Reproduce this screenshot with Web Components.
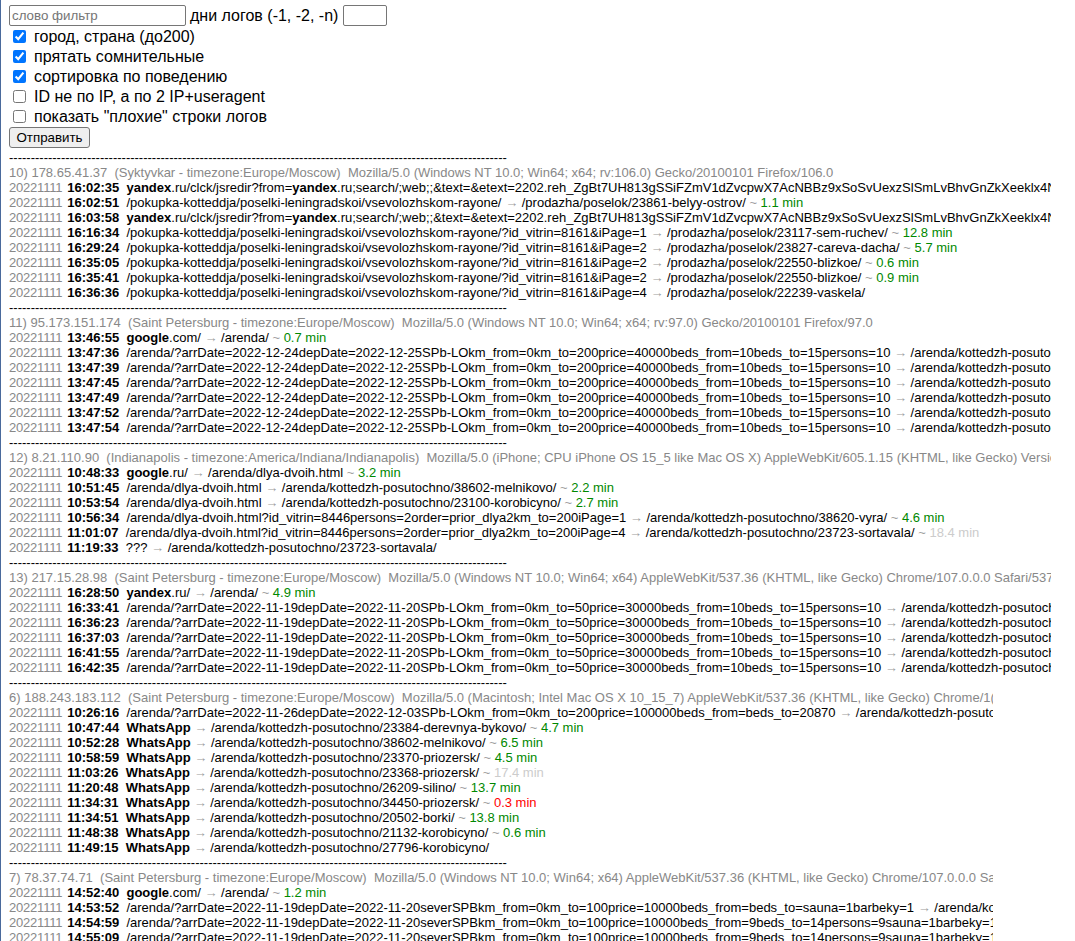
<!DOCTYPE html>
<html lang="ru">
<head>
<meta charset="utf-8">
<title>логи</title>
<style>
    html, body { margin: 0; background: #fff; }
</style>
</head>
<body>
<log-page>
    <log-filter-form></log-filter-form>

    <log-session head="10) 178.65.41.37&nbsp; (Syktyvkar - timezone:Europe/Moscow)&nbsp; Mozilla/5.0 (Windows NT 10.0; Win64; x64; rv:106.0) Gecko/20100101 Firefox/106.0">
        <log-row time="16:02:35"><b>yandex</b>.ru/clck/jsredir?from=<b>yandex</b>.ru;search/;web;;&amp;text=&amp;etext=2202.reh_ZgBt7UH813gSSiFZmV1dZvcpwX7AcNBBz9xSoSvUexzSlSmLvBhvGnZkXeeklx4NmWq7hT2kLp</log-row>
        <log-row time="16:02:51" to="/prodazha/poselok/23861-belyy-ostrov/" dur="1.1">/pokupka-kotteddja/poselki-leningradskoi/vsevolozhskom-rayone/</log-row>
        <log-row time="16:03:58"><b>yandex</b>.ru/clck/jsredir?from=<b>yandex</b>.ru;search/;web;;&amp;text=&amp;etext=2202.reh_ZgBt7UH813gSSiFZmV1dZvcpwX7AcNBBz9xSoSvUexzSlSmLvBhvGnZkXeeklx4NmWq7hT2kLp</log-row>
        <log-row time="16:16:34" to="/prodazha/poselok/23117-sem-ruchev/" dur="12.8">/pokupka-kotteddja/poselki-leningradskoi/vsevolozhskom-rayone/?id_vitrin=8161&amp;iPage=1</log-row>
        <log-row time="16:29:24" to="/prodazha/poselok/23827-careva-dacha/" dur="5.7">/pokupka-kotteddja/poselki-leningradskoi/vsevolozhskom-rayone/?id_vitrin=8161&amp;iPage=2</log-row>
        <log-row time="16:35:05" to="/prodazha/poselok/22550-blizkoe/" dur="0.6">/pokupka-kotteddja/poselki-leningradskoi/vsevolozhskom-rayone/?id_vitrin=8161&amp;iPage=2</log-row>
        <log-row time="16:35:41" to="/prodazha/poselok/22550-blizkoe/" dur="0.9">/pokupka-kotteddja/poselki-leningradskoi/vsevolozhskom-rayone/?id_vitrin=8161&amp;iPage=2</log-row>
        <log-row time="16:36:36" to="/prodazha/poselok/22239-vaskela/">/pokupka-kotteddja/poselki-leningradskoi/vsevolozhskom-rayone/?id_vitrin=8161&amp;iPage=4</log-row>
    </log-session>

    <log-session head="11) 95.173.151.174&nbsp; (Saint Petersburg - timezone:Europe/Moscow)&nbsp; Mozilla/5.0 (Windows NT 10.0; Win64; x64; rv:97.0) Gecko/20100101 Firefox/97.0">
        <log-row time="13:46:55" to="/arenda/" dur="0.7"><b>google</b>.com/</log-row>
        <log-row time="13:47:36" to="/arenda/kottedzh-posutochno/">/arenda/?arrDate=2022-12-24depDate=2022-12-25SPb-LOkm_from=0km_to=200price=40000beds_from=10beds_to=15persons=10</log-row>
        <log-row time="13:47:39" to="/arenda/kottedzh-posutochno/">/arenda/?arrDate=2022-12-24depDate=2022-12-25SPb-LOkm_from=0km_to=200price=40000beds_from=10beds_to=15persons=10</log-row>
        <log-row time="13:47:45" to="/arenda/kottedzh-posutochno/">/arenda/?arrDate=2022-12-24depDate=2022-12-25SPb-LOkm_from=0km_to=200price=40000beds_from=10beds_to=15persons=10</log-row>
        <log-row time="13:47:49" to="/arenda/kottedzh-posutochno/">/arenda/?arrDate=2022-12-24depDate=2022-12-25SPb-LOkm_from=0km_to=200price=40000beds_from=10beds_to=15persons=10</log-row>
        <log-row time="13:47:52" to="/arenda/kottedzh-posutochno/">/arenda/?arrDate=2022-12-24depDate=2022-12-25SPb-LOkm_from=0km_to=200price=40000beds_from=10beds_to=15persons=10</log-row>
        <log-row time="13:47:54" to="/arenda/kottedzh-posutochno/">/arenda/?arrDate=2022-12-24depDate=2022-12-25SPb-LOkm_from=0km_to=200price=40000beds_from=10beds_to=15persons=10</log-row>
    </log-session>

    <log-session head="12) 8.21.110.90&nbsp; (Indianapolis - timezone:America/Indiana/Indianapolis)&nbsp; Mozilla/5.0 (iPhone; CPU iPhone OS 15_5 like Mac OS X) AppleWebKit/605.1.15 (KHTML, like Gecko) Version/15.5 Mobile">
        <log-row time="10:48:33" to="/arenda/dlya-dvoih.html" dur="3.2"><b>google</b>.ru/</log-row>
        <log-row time="10:51:45" to="/arenda/kottedzh-posutochno/38602-melnikovo/" dur="2.2">/arenda/dlya-dvoih.html</log-row>
        <log-row time="10:53:54" to="/arenda/kottedzh-posutochno/23100-korobicyno/" dur="2.7">/arenda/dlya-dvoih.html</log-row>
        <log-row time="10:56:34" to="/arenda/kottedzh-posutochno/38620-vyra/" dur="4.6">/arenda/dlya-dvoih.html?id_vitrin=8446persons=2order=prior_dlya2km_to=200iPage=1</log-row>
        <log-row time="11:01:07" to="/arenda/kottedzh-posutochno/23723-sortavala/" dur="18.4">/arenda/dlya-dvoih.html?id_vitrin=8446persons=2order=prior_dlya2km_to=200iPage=4</log-row>
        <log-row time="11:19:33" to="/arenda/kottedzh-posutochno/23723-sortavala/">???</log-row>
    </log-session>

    <log-session head="13) 217.15.28.98&nbsp; (Saint Petersburg - timezone:Europe/Moscow)&nbsp; Mozilla/5.0 (Windows NT 10.0; Win64; x64) AppleWebKit/537.36 (KHTML, like Gecko) Chrome/107.0.0.0 Safari/537.36">
        <log-row time="16:28:50" to="/arenda/" dur="4.9"><b>yandex</b>.ru/</log-row>
        <log-row time="16:33:41" to="/arenda/kottedzh-posutochno/">/arenda/?arrDate=2022-11-19depDate=2022-11-20SPb-LOkm_from=0km_to=50price=30000beds_from=10beds_to=15persons=10</log-row>
        <log-row time="16:36:23" to="/arenda/kottedzh-posutochno/">/arenda/?arrDate=2022-11-19depDate=2022-11-20SPb-LOkm_from=0km_to=50price=30000beds_from=10beds_to=15persons=10</log-row>
        <log-row time="16:37:03" to="/arenda/kottedzh-posutochno/">/arenda/?arrDate=2022-11-19depDate=2022-11-20SPb-LOkm_from=0km_to=50price=30000beds_from=10beds_to=15persons=10</log-row>
        <log-row time="16:41:55" to="/arenda/kottedzh-posutochno/">/arenda/?arrDate=2022-11-19depDate=2022-11-20SPb-LOkm_from=0km_to=50price=30000beds_from=10beds_to=15persons=10</log-row>
        <log-row time="16:42:35" to="/arenda/kottedzh-posutochno/">/arenda/?arrDate=2022-11-19depDate=2022-11-20SPb-LOkm_from=0km_to=50price=30000beds_from=10beds_to=15persons=10</log-row>
    </log-session>

    <log-session narrow head="6) 188.243.183.112&nbsp; (Saint Petersburg - timezone:Europe/Moscow)&nbsp; Mozilla/5.0 (Macintosh; Intel Mac OS X 10_15_7) AppleWebKit/537.36 (KHTML, like Gecko) Chrome/1(107.0.530.0 Safari">
        <log-row time="10:26:16" to="/arenda/kottedzh-posutochno/">/arenda/?arrDate=2022-11-26depDate=2022-12-03SPb-LOkm_from=0km_to=200price=100000beds_from=beds_to=20870</log-row>
        <log-row time="10:47:44" to="/arenda/kottedzh-posutochno/23384-derevnya-bykovo/" dur="4.7"><b>WhatsApp</b></log-row>
        <log-row time="10:52:28" to="/arenda/kottedzh-posutochno/38602-melnikovo/" dur="6.5"><b>WhatsApp</b></log-row>
        <log-row time="10:58:59" to="/arenda/kottedzh-posutochno/23370-priozersk/" dur="4.5"><b>WhatsApp</b></log-row>
        <log-row time="11:03:26" to="/arenda/kottedzh-posutochno/23368-priozersk/" dur="17.4"><b>WhatsApp</b></log-row>
        <log-row time="11:20:48" to="/arenda/kottedzh-posutochno/26209-silino/" dur="13.7"><b>WhatsApp</b></log-row>
        <log-row time="11:34:31" to="/arenda/kottedzh-posutochno/34450-priozersk/" dur="0.3"><b>WhatsApp</b></log-row>
        <log-row time="11:34:51" to="/arenda/kottedzh-posutochno/20502-borki/" dur="13.8"><b>WhatsApp</b></log-row>
        <log-row time="11:48:38" to="/arenda/kottedzh-posutochno/21132-korobicyno/" dur="0.6"><b>WhatsApp</b></log-row>
        <log-row time="11:49:15" to="/arenda/kottedzh-posutochno/27796-korobicyno/"><b>WhatsApp</b></log-row>
    </log-session>

    <log-session narrow head="7) 78.37.74.71&nbsp; (Saint Petersburg - timezone:Europe/Moscow)&nbsp; Mozilla/5.0 (Windows NT 10.0; Win64; x64) AppleWebKit/537.36 (KHTML, like Gecko) Chrome/107.0.0.0 Safari/537.36">
        <log-row time="14:52:40" to="/arenda/" dur="1.2"><b>google</b>.com/</log-row>
        <log-row time="14:53:52" to="/arenda/kottedzh-posutochno/">/arenda/?arrDate=2022-11-19depDate=2022-11-20severSPBkm_from=0km_to=100price=10000beds_from=beds_to=sauna=1barbeky=1</log-row>
        <log-row time="14:54:59">/arenda/?arrDate=2022-11-19depDate=2022-11-20severSPBkm_from=0km_to=100price=10000beds_from=9beds_to=14persons=9sauna=1barbeky=1</log-row>
        <log-row time="14:55:09">/arenda/?arrDate=2022-11-19depDate=2022-11-20severSPBkm_from=0km_to=100price=10000beds_from=9beds_to=14persons=9sauna=1barbeky=1</log-row>
    </log-session>
</log-page>

<script>
class LogPage extends HTMLElement {
    constructor() {
        super();
        this.attachShadow({ mode: 'open' });
    }

    connectedCallback() {
        this.shadowRoot.innerHTML = `
            <style>
                :host {
                    display: block;
                    box-sizing: border-box;
                    height: 941px;
                    overflow: hidden;
                    padding: 5px 0 0 8px;
                    border-left: 1px solid #4a6a9c;
                    color: #000;
                    font-family: "Liberation Sans", Arial, sans-serif;
                    font-size: 13px;
                    line-height: 15px;
                }
            </style>
            <slot></slot>
        `;
    }
}

class LogFilterForm extends HTMLElement {
    constructor() {
        super();
        this.attachShadow({ mode: 'open' });
    }

    connectedCallback() {
        this.shadowRoot.innerHTML = `
            <style>
                :host {
                    display: block;
                    font-size: 16px;
                    line-height: 20px;
                }
                form {
                    display: flex;
                    flex-direction: column;
                    align-items: flex-start;
                    padding-bottom: 2px;
                }
                .top {
                    display: flex;
                    align-items: center;
                    gap: 4px;
                    height: 21px;
                    margin-bottom: 1px;
                }
                input[type=text] {
                    box-sizing: border-box;
                    height: 21px;
                    padding: 1px 2px;
                    border: 1px solid #767676;
                    border-radius: 2px;
                    font: 13.33px "Liberation Sans", Arial, sans-serif;
                }
                input[name=word] { width: 177px; }
                input[name=days] { width: 44px; margin-left: 1px; }
                input::placeholder { color: #757575; }
                label {
                    display: flex;
                    align-items: center;
                    height: 20px;
                    padding-left: 4px;
                }
                label input {
                    width: 13px;
                    height: 13px;
                    margin: -2px 8px 0 0;
                    accent-color: #0075ff;
                }
                button {
                    box-sizing: border-box;
                    width: 81px;
                    height: 21px;
                    padding: 0;
                    border: 1px solid #767676;
                    border-radius: 3px;
                    background: #efefef;
                    color: #000;
                    font: 13.33px "Liberation Sans", Arial, sans-serif;
                }
            </style>
            <form>
                <div class="top">
                    <input name="word" type="text" placeholder="слово фильтр">
                    <span>дни логов (-1, -2, -n)</span>
                    <input name="days" type="text">
                </div>
                <label><input type="checkbox" checked>город, страна (до200)</label>
                <label><input type="checkbox" checked>прятать сомнительные</label>
                <label><input type="checkbox" checked>сортировка по поведению</label>
                <label><input type="checkbox">ID не по IP, а по 2 IP+useragent</label>
                <label><input type="checkbox">показать "плохие" строки логов</label>
                <button type="submit">Отправить</button>
            </form>
        `;
    }
}

class LogSession extends HTMLElement {
    constructor() {
        super();
        this.attachShadow({ mode: 'open' });
    }

    connectedCallback() {
        this.shadowRoot.innerHTML = `
            <style>
                :host {
                    display: block;
                    width: 1042px;
                    overflow: hidden;
                    white-space: nowrap;
                }
                :host([narrow]) { width: 984px; }
                .line { display: block; }
                .head { color: #888; }
            </style>
            <span class="line">${'-'.repeat(115)}</span>
            <span class="line head"></span>
            <slot></slot>
        `;
        this.shadowRoot.querySelector('.head').textContent = this.getAttribute('head');
    }
}

class LogRow extends HTMLElement {
    constructor() {
        super();
        this.attachShadow({ mode: 'open' });
    }

    durColor(dur) {
        if (dur < 0.5) return '#f00';
        if (dur > 15) return '#ccc';
        return '#080';
    }

    connectedCallback() {
        const to = this.getAttribute('to');
        const dur = this.getAttribute('dur');
        this.shadowRoot.innerHTML = `
            <style>
                :host { display: block; }
                .date { color: #888; letter-spacing: -0.2px; margin-right: 1.2px; }
                .time { font-weight: bold; }
                .sep { color: #a0a0a0; }
            </style>
            <span class="date">20221111</span> <span class="time">${this.getAttribute('time')}</span>&nbsp;&nbsp;<slot></slot>${to ? ` <span class="sep">→</span> ${to}` : ''}${dur ? ` <span class="sep">~</span> <span style="color: ${this.durColor(parseFloat(dur))}">${dur} min</span>` : ''}
        `;
    }
}

customElements.define('log-page', LogPage);
customElements.define('log-filter-form', LogFilterForm);
customElements.define('log-session', LogSession);
customElements.define('log-row', LogRow);
</script>
</body>
</html>
